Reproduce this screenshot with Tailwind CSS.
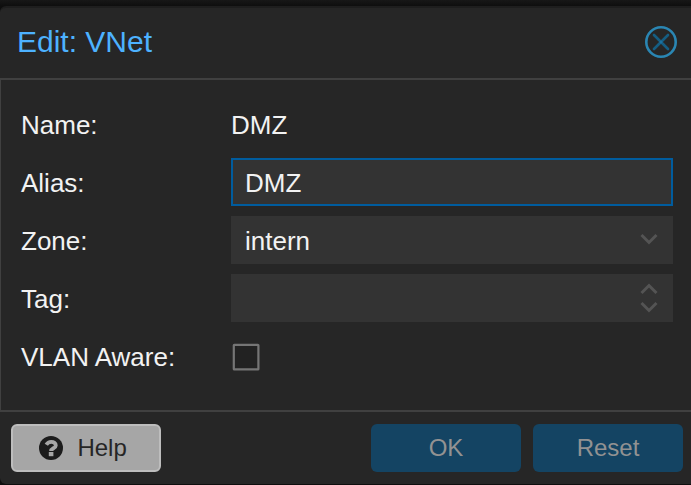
<!DOCTYPE html>
<html lang="en">
<head>
<meta charset="utf-8">
<title>Edit: VNet</title>
<script src="https://cdn.jsdelivr.net/npm/@tailwindcss/browser@4"></script>
</head>
<body class="h-[485px] w-[691px] overflow-hidden bg-[#141414] bg-linear-to-b from-[#171717] from-0% to-[#0e0e0e] to-[6px] pt-[6px] font-['Liberation_Sans',Arial,sans-serif] text-[26px] text-[#f2f2f2]">
<main class="flex h-[478px] flex-col rounded-l-[6px] border-t-2 border-[#1e1e1e] bg-[#262626]">
  <header class="flex h-[72px] shrink-0 items-center justify-between border-b-2 border-[#404040] pr-[14px] pb-[2px] pl-[17px]">
    <h1 class="text-[30px] leading-[34px] text-[#4db2ff]">Edit: VNet</h1>
    <button type="button" aria-label="Close" class="size-8">
      <svg class="size-8" viewBox="0 0 32 32" fill="none">
        <circle cx="16" cy="16" r="14.7" stroke="#2a86b3" stroke-width="2.6"/>
        <path d="M9 9l14 14M23 9L9 23" stroke="#155d82" stroke-width="2.7" stroke-linecap="round"/>
        <circle cx="16" cy="16" r="1.5" fill="#1b71a0"/>
      </svg>
    </button>
  </header>
  <form class="flex h-[332px] shrink-0 flex-col gap-[10px] border-b-2 border-l border-[#404040] pt-5 pr-[18px] pl-5">
    <div class="flex h-12 items-center"><span class="w-[210px] pt-[2px]">Name:</span><span class="pt-[2px]">DMZ</span></div>
    <div class="flex h-12 items-center"><span class="w-[210px] pt-[2px]">Alias:</span>
      <div class="flex h-12 flex-1 items-center border-2 border-[#005c9e] bg-[#333333] px-3 pt-[2px]">DMZ</div></div>
    <div class="flex h-12 items-center"><span class="w-[210px] pt-[2px]">Zone:</span>
      <div class="flex h-12 flex-1 items-center justify-between bg-[#333333] pr-[15px] pl-[14px]"><span class="pt-[2px]">intern</span>
        <svg class="h-12 w-[18px]" viewBox="0 0 18 48" fill="none" stroke="#545454" stroke-width="3"><path d="M1.5 19l7.5 7.5 7.5-7.5"/></svg>
      </div></div>
    <div class="flex h-12 items-center"><span class="w-[210px] pt-[2px]">Tag:</span>
      <div class="flex h-12 flex-1 items-center justify-end bg-[#333333] pr-[15px]">
        <svg class="h-12 w-[18px]" viewBox="0 0 18 48" fill="none" stroke="#545454" stroke-width="3"><path d="M1.5 19l7.5-7.5 7.5 7.5M1.5 29l7.5 7.5 7.5-7.5"/></svg>
      </div></div>
    <div class="flex h-12 items-center"><span class="w-[210px] pt-[2px]">VLAN Aware:</span>
      <svg class="h-12 w-[29px]" viewBox="0 0 29 48" fill="none"><rect x="2.8" y="12.8" width="24.6" height="24.6" rx=".5" fill="#222222" stroke="#757575" stroke-width="2.2"/></svg></div>
  </form>
  <footer class="flex h-[72px] shrink-0 items-center justify-between pr-2 pl-[11px] text-[24px]">
    <button type="button" class="flex h-12 w-[150px] items-center rounded-[6px] border-2 border-[#bdbdbd] bg-[#a6a6a6] pl-[26.4px] text-[#262626]">
      <svg class="mr-[14px] size-6" viewBox="0 0 24 24"><circle cx="12" cy="12" r="12" fill="#1c1c1c"/><path d="M7.3 8.8C8.4 6.9 9.9 5.9 12.2 5.9c2.6 0 4.6 1.4 4.6 3.5 0 3-4.7 2.7-4.7 5.6" fill="none" stroke="#a6a6a6" stroke-width="3.8"/><rect x="9.8" y="16" width="4.6" height="4.2" fill="#a6a6a6"/></svg>
      <span>Help</span>
    </button>
    <div class="flex gap-3 text-[#929292]">
      <button type="button" class="h-12 w-[150px] rounded-[6px] bg-[#144463]">OK</button>
      <button type="button" class="h-12 w-[150px] rounded-[6px] bg-[#144463]">Reset</button>
    </div>
  </footer>
</main>
</body>
</html>
